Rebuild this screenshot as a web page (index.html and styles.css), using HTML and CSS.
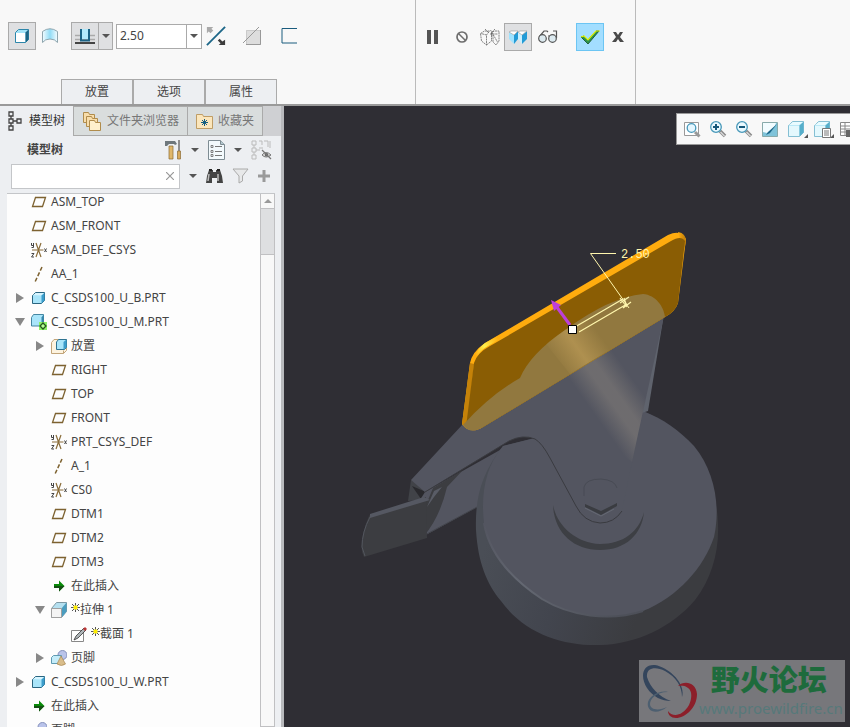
FILE: index.html
```
<!DOCTYPE html>
<html lang="zh-CN">
<head>
	<meta charset="utf-8">
	<title>模型树</title>
	<link rel="stylesheet" href="styles.css">
</head>
<body>
	<!-- shared icons -->
	<svg class="defs" width="0" height="0">
		<symbol id="i-plane" viewBox="0 0 16 16"><path d="M4.5 3.5h10l-3 9h-10z" fill="none" stroke="#7d6230" stroke-width="1.3"/></symbol>
		<symbol id="i-csys" viewBox="0 0 16 16"><path d="M1 8h11.500M5 1l5 14M10 1L5 15" fill="none" stroke="#8a6d3a" stroke-width="1.200"/><path d="M.5 1v2.500h2V1M2.500 3v2.500h-2M.5 11.500h2.500l-2.500 3.500h2.500M13.500 6.500l2 3.500M15.500 6.500l-2 3.500" fill="none" stroke="#444"/></symbol>
		<symbol id="i-axis" viewBox="0 0 16 16"><path d="M11 1L4 16" fill="none" stroke="#7d6230" stroke-width="1.500" stroke-dasharray="4 2"/></symbol>
		<symbol id="i-part" viewBox="0 0 16 16"><path d="M1.500 5.500l3-3h9v8l-3 3h-9z" fill="#a9e5fa" stroke="#2a6580"/><path d="M10.500 5.500l3-3v8l-3 3z" fill="#3c9dcb"/><path d="M2 5l3-2h8l-3 2.500z" fill="#d8f5ff"/></symbol>
		<symbol id="i-active" viewBox="0 0 16 16"><path d="M.5 3.500l2-3h10v9l-2 2.500H.5z" fill="#a9e5fa" stroke="#4586a2"/><path d="M10.500 3.500l2-3v9l-2 2.500z" fill="#3488ad"/><path d="M8 8h8v8H8z" fill="#8af266"/><path d="M12 9l3 3-3 3-3-3z" fill="#b5ff96" stroke="#25571e" stroke-width="1.300"/></symbol>
		<symbol id="i-place" viewBox="0 0 16 16"><path d="M.5 4.500L3 1.500h12.500v11l-3 3H.5z" fill="#fdf3df" stroke="#c2a57a"/><path d="M12.500 12.500v3" stroke="#c2a57a"/><path d="M5.500 4l2-2.500h8v8l-2 2h-8z" fill="#a9e5fa" stroke="#2f7391"/><path d="M12.500 4l3-2.500v8l-3 2z" fill="#3c9dcb"/></symbol>
		<symbol id="i-insert" viewBox="0 0 16 16"><path d="M3 6h5V2.500L13.500 8 8 13.500V10H3z" fill="#0a8a0a"/><path d="M3 8h10.500L8 13.500V10H3z" fill="#155014"/></symbol>
		<symbol id="i-extrude" viewBox="0 0 16 16"><path d="M.5 6.500l5-6h10v9l-5 6H.5z" fill="#b5e0f0" stroke="#7e98a3"/><path d="M10.500 6.500l5-6v9l-5 6z" fill="#4a9dc0"/><path d="M.5 6.500h10v9H.5z" fill="#f4f4f4" stroke="#a0a0a0"/></symbol>
		<symbol id="i-sketch" viewBox="0 0 16 16"><path d="M.5 4.500h12v11H.5z" fill="#fff" stroke="#888"/><path d="M3 14l2-4 8-8 2 2-8 8z" fill="#aeb5b8" stroke="#333" stroke-width=".8"/><path d="M12 3l2-2 2 2-2 2z" fill="#ba3434"/></symbol>
		<symbol id="i-footer" viewBox="0 0 16 16"><circle cx="11.500" cy="5" r="4.500" fill="#b9c3ea" stroke="#8490bb"/><path d="M.5 7.500l2-2h8v6l-2 2h-8z" fill="#c4ecf9" stroke="#5f9bb2"/><path d="M10 6l4.500 8q-4 3-8.500 0z" fill="#d9bd8b" stroke="#a88652" stroke-width=".7"/></symbol>
		<symbol id="i-star" viewBox="0 0 9 9"><path d="M2.500 2.500h4v4h-4z" fill="#ffee00"/><path d="M1 1l2 2M8 1L6 3M1 8l2-2M8 8L6 6M4.500 0v2.500M4.500 6.500V9M0 4.500h2.500M6.500 4.500H9" stroke="#555"/></symbol>
		<symbol id="i-cube" viewBox="0 0 18 18"><path d="M1.500 5.500l4-4h11v11l-4 4h-11z" fill="#bce9f7" stroke="#85bfd3"/><path d="M12.500 5.500l4-4v11l-4 4z" fill="#56aeca"/><path d="M2 6h10v10H2z" fill="#e4f8fd"/><path d="M2 5l4-3h10l-4 3z" fill="#e9fbff"/></symbol>
		<symbol id="i-lens" viewBox="0 0 18 18"><path d="M11 11l5 5" stroke="#888" stroke-width="3.500"/><path d="M11.500 12l4 4" stroke="#d8d8d8" stroke-width="1.500"/><circle cx="7" cy="7" r="5.300" fill="#eaf9ff" stroke="#4798b9" stroke-width="1.300"/></symbol>
	</svg>

	<header class="ribbon">
		<section class="options">
			<div class="row">
				<button class="tool on" aria-label="实体"><svg width="18" height="18" viewBox="0 0 18 18"><path d="M2.500 5.500l3-3h10v10l-3 3h-10z" fill="#a2e3f8" stroke="#2d86aa"/><path d="M12.500 5.500l3-3v10l-3 3z" fill="#1c6484"/><path d="M3 6h9v9H3z" fill="#fff"/></svg></button>
				<button class="tool surf" aria-label="曲面"><svg width="18" height="18" viewBox="0 0 18 18"><defs><linearGradient id="sf"><stop offset="0" stop-color="#f3fcff"/><stop offset=".5" stop-color="#91dcf6"/><stop offset="1" stop-color="#f5fcff"/></linearGradient></defs><path d="M1.500 4.500Q9-1 16.500 4.500v11Q14 12 9 12t-7.500 3.500z" fill="url(#sf)" stroke="#8fa6af"/></svg></button>
				<div class="split">
					<button aria-label="深度"><svg width="20" height="18" viewBox="0 0 20 18"><path d="M0 8.500h5M15 8.500h5M0 12.500h20" stroke="#aaa" stroke-width="1.500"/><path d="M0 16h20" stroke="#444" stroke-width="2"/><path d="M7 2h6v10H7z" fill="#b2e9fb"/><path d="M6 2v11.500h8V2" fill="none" stroke="#1a6285" stroke-width="2"/></svg></button>
					<button class="drop" aria-label="更多深度"><i class="caret"></i></button>
				</div>
				<div class="combo">
					<input type="text" value="2.50" aria-label="深度值">
					<button aria-label="最近值"><i class="caret"></i></button>
				</div>
				<button class="plain flip" aria-label="反向"><svg width="20" height="20" viewBox="0 0 22 22"><path d="M1 21L21 1" stroke="#1c6688" stroke-width="2"/><path d="M1 1h7L6 3l2 2-3 3-2-2-2 2z" fill="#aaa"/><path d="M21 21h-7l2-2-3-3 2-2 3 3 3-2z" fill="#3c3c3c"/></svg></button>
				<button class="plain cut" aria-label="移除材料"><svg width="20" height="20" viewBox="0 0 20 20"><path d="M4.500 4.500h14v14h-14z" fill="#ddd" stroke="#aaa" stroke-dasharray="1 1"/><path d="M18.500 4v14.500H4" fill="none" stroke="#999"/><path d="M1 17L17 1" stroke="#999"/></svg></button>
				<button class="plain" aria-label="加厚"><svg width="16" height="16" viewBox="0 0 16 16"><path d="M16 .5H1v14.500h15" fill="none" stroke="#1a5c7e"/></svg></button>
			</div>
			<nav class="panels">
				<button>放置</button>
				<button>选项</button>
				<button>属性</button>
			</nav>
		</section>
		<section class="confirm">
			<button class="plain" aria-label="暂停"><svg width="12" height="14" viewBox="0 0 12 14"><path d="M0 0h4v14H0zM7 0h4v14H7z" fill="#555"/></svg></button>
			<button class="plain ban" aria-label="无预览"><svg width="12" height="12" viewBox="0 0 12 12"><circle cx="6" cy="6" r="5" fill="none" stroke="#6e6e6e" stroke-width="1.700"/><path d="M2.500 2.500l7 7" stroke="#6e6e6e" stroke-width="1.500"/></svg></button>
			<button class="plain wire" aria-label="分离"><svg width="20" height="17" viewBox="0 0 20 17"><path d="M.5 4.500l4-2.500h5l-3 4v10l-5-4zM6.500 6L1 4.500M6.500 16l5-4V3M10 5h8M10.500 1l7 12M11 5l3-3h5v10l-3 4-3-3V6zM5 0l4 4M15 0l-4 4" fill="none" stroke="#666" stroke-width=".8" stroke-dasharray="2 .6"/></svg></button>
			<button class="tool on" aria-label="连接"><svg width="20" height="15" viewBox="0 0 20 15"><path d="M1 2l5 3v9l-5-5z" fill="#9fe3ff"/><path d="M6 5l4-4v8l-4 5z" fill="#249bd6"/><path d="M10 2l4 3v9l-4-5z" fill="#c9f0ff"/><path d="M14 5l5-4v8l-5 5z" fill="#249bd6"/><path d="M1 2l2-1h7L6 5zM10 2l2-1h7l-5 4z" fill="#fff" stroke="#999" stroke-width=".6"/></svg></button>
			<button class="plain glasses" aria-label="预览"><svg width="20" height="14" viewBox="0 0 20 14"><path d="M1 7L6 1h3l1 1M10 6h2M18.500 8V1H15" fill="none" stroke="#555" stroke-width="1.200"/><circle cx="4.500" cy="8.500" r="3.800" fill="#dceaf0" stroke="#555" stroke-width="1.200"/><circle cx="14.500" cy="8.500" r="3.800" fill="#dceaf0" stroke="#555" stroke-width="1.200"/></svg></button>
			<button class="tool ok" aria-label="确定"><svg width="20" height="15" viewBox="0 0 20 15"><path d="M1 7l3-1 4 4 8-9h3L8 14z" fill="#2c944c" stroke="#24613b"/><path d="M1 7l3-1 4 4 8-9h4" fill="none" stroke="#e5f500" stroke-width="1.200"/></svg></button>
			<button class="plain" aria-label="取消"><svg width="12" height="10" viewBox="0 0 12 10"><path d="M1 0h3l2 3 2-3h3L8 5l4 5H8L6 7l-2 3H0l4-5z" fill="#4a4a4a"/></svg></button>
		</section>
	</header>

	<main class="work">
		<aside class="side">
			<nav class="tabs">
				<button class="current"><svg width="14" height="20" viewBox="0 0 14 20"><path d="M1 1h4v4H1zM1 8h4v4H1zM1 15h4v4H1zM9 8h4v4H9zM3 5v3M3 12v3M5 10h4" fill="none" stroke="#444" stroke-width="1.300"/></svg>模型树</button>
				<button><svg width="20" height="20" viewBox="0 0 20 20"><g fill="#f8ddaa" stroke="#b08c4c"><path d="M1.500 1.500h5l1 2h5v8h-11z"/><path d="M4.500 5.500h5l1 2h5v8h-11z"/><path d="M7.500 9.500h5l1 2h5v8h-11z" fill="#fff0cd"/></g></svg>文件夹浏览器</button>
				<button><svg width="17" height="16" viewBox="0 0 17 16"><path d="M.5 1.500h6l1 2h9v12H.5z" fill="#fbe6bb" stroke="#bf9d65"/><path d="M8.500 6v7M5 9.500h7M6 7l5 5M11 7l-5 5" stroke="#145e80"/></svg>收藏夹</button>
			</nav>
			<div class="bar">
				<h1>模型树</h1>
				<button class="plain" aria-label="设置"><svg width="17" height="20" viewBox="0 0 17 20"><path d="M1 1h9l2 3-2 1-1-1H4L2 6H0V1z" fill="#6e777c"/><path d="M4 6h4v13H4z" fill="#e0b76b" stroke="#8b6a34" stroke-width=".7"/><path d="M14 0v11" stroke="#777" stroke-width="1.600"/><path d="M12.500 11h3v8h-3z" fill="#d8aa5d" stroke="#8b6a34" stroke-width=".7"/></svg></button>
				<button class="plain" aria-label="设置菜单"><i class="caret"></i></button>
				<button class="plain" aria-label="显示"><svg width="17" height="20" viewBox="0 0 17 20"><path d="M.5.5h12l4 4v15H.5z" fill="#f3fafd" stroke="#7e8c93"/><path d="M12.500.5v4h4" fill="#b4c8d0" stroke="#7e8c93"/><path d="M7 6.500h7M7 11.500h7M7 15.500h7" stroke="#777"/><path d="M3 5.500h2v2H3zM3 10.500h2v2H3zM3 14.500h2v2H3z" fill="none" stroke="#666" stroke-width=".8"/></svg></button>
				<button class="plain" aria-label="显示菜单"><i class="caret"></i></button>
				<button class="plain" aria-label="隐藏列"><svg width="21" height="20" viewBox="0 0 21 20"><path d="M1 1h4v4H1zM1 8h4v4H1zM1 15h4v4H1zM3 5v3M3 12v3M5 10h4M8 1h3v4M13 1h4v6M8 8h4M19 1v7" fill="none" stroke="#bbb"/><path d="M11 15q4-5 9 0-5 4-9 0z" fill="#ddd" stroke="#777"/><circle cx="15.500" cy="14.800" r="1.800" fill="#666"/><path d="M11 10l9 9" stroke="#777" stroke-width="1.300"/></svg></button>
			</div>
			<div class="bar find">
				<div class="search">
					<input type="text" aria-label="搜索模型树">
					<button aria-label="清除"><svg width="8" height="8" viewBox="0 0 8 8"><path d="M0 0l8 8M8 0L0 8" stroke="#999" stroke-width="1.200"/></svg></button>
				</div>
				<button class="plain" aria-label="搜索选项"><i class="caret"></i></button>
				<button class="plain" aria-label="查找"><svg width="17" height="16" viewBox="0 0 17 16"><path d="M3 2h4v2h3V2h4l2 6 1 7h-6v-5H6v5H0l1-7z" fill="#444"/><path d="M3 1h3v2H3zM11 1h3v2h-3z" fill="#222"/><path d="M3 6l-1 7M12 6v7" stroke="#bbb" stroke-width="1.500"/></svg></button>
				<button class="plain" aria-label="过滤"><svg width="17" height="16" viewBox="0 0 17 16"><path d="M1 1h15l-5.500 7v5L7 15V8z" fill="#e7e8e9" stroke="#aaa"/></svg></button>
				<button class="plain" aria-label="添加"><svg width="12" height="12" viewBox="0 0 12 12"><path d="M6 0v12M0 6h12" stroke="#9a9a9a" stroke-width="3"/></svg></button>
			</div>
			<div class="pane">
				<ul class="tree">
					<li><div class="node"><i></i><svg><use href="#i-plane"/></svg>ASM_TOP</div></li>
					<li><div class="node"><i></i><svg><use href="#i-plane"/></svg>ASM_FRONT</div></li>
					<li><div class="node"><i></i><svg><use href="#i-csys"/></svg>ASM_DEF_CSYS</div></li>
					<li><div class="node"><i></i><svg><use href="#i-axis"/></svg>AA_1</div></li>
					<li><div class="node"><button class="closed" aria-label="展开"></button><svg><use href="#i-part"/></svg>C_CSDS100_U_B.PRT</div></li>
					<li><div class="node"><button class="open" aria-label="折叠"></button><svg><use href="#i-active"/></svg>C_CSDS100_U_M.PRT</div>
						<ul>
							<li><div class="node"><button class="closed" aria-label="展开"></button><svg><use href="#i-place"/></svg>放置</div></li>
							<li><div class="node"><i></i><svg><use href="#i-plane"/></svg>RIGHT</div></li>
							<li><div class="node"><i></i><svg><use href="#i-plane"/></svg>TOP</div></li>
							<li><div class="node"><i></i><svg><use href="#i-plane"/></svg>FRONT</div></li>
							<li><div class="node"><i></i><svg><use href="#i-csys"/></svg>PRT_CSYS_DEF</div></li>
							<li><div class="node"><i></i><svg><use href="#i-axis"/></svg>A_1</div></li>
							<li><div class="node"><i></i><svg><use href="#i-csys"/></svg>CS0</div></li>
							<li><div class="node"><i></i><svg><use href="#i-plane"/></svg>DTM1</div></li>
							<li><div class="node"><i></i><svg><use href="#i-plane"/></svg>DTM2</div></li>
							<li><div class="node"><i></i><svg><use href="#i-plane"/></svg>DTM3</div></li>
							<li><div class="node"><i></i><svg><use href="#i-insert"/></svg>在此插入</div></li>
							<li><div class="node"><button class="open" aria-label="折叠"></button><svg><use href="#i-extrude"/></svg><span><svg class="star"><use href="#i-star"/></svg>拉伸 1</span></div>
								<ul>
									<li><div class="node"><i></i><svg><use href="#i-sketch"/></svg><span><svg class="star"><use href="#i-star"/></svg>截面 1</span></div></li>
								</ul>
							</li>
							<li><div class="node"><button class="closed" aria-label="展开"></button><svg><use href="#i-footer"/></svg>页脚</div></li>
						</ul>
					</li>
					<li><div class="node"><button class="closed" aria-label="展开"></button><svg><use href="#i-part"/></svg>C_CSDS100_U_W.PRT</div></li>
					<li><div class="node"><i></i><svg><use href="#i-insert"/></svg>在此插入</div></li>
					<li><div class="node"><i></i><svg><use href="#i-footer"/></svg>页脚</div></li>
				</ul>
				<div class="scroll">
					<button aria-label="向上滚动"></button>
					<div class="thumb"></div>
				</div>
			</div>
		</aside>

		<section class="view">
			<svg class="scene" viewBox="284 106 566 621" preserveAspectRatio="xMidYMid meet">
				<defs>
					<linearGradient id="tyre" gradientUnits="userSpaceOnUse" x1="480" y1="560" x2="640" y2="610">
						<stop offset="0" stop-color="#4a4e56"/><stop offset=".5" stop-color="#42454e"/><stop offset="1" stop-color="#3b3c40"/>
					</linearGradient>
					<linearGradient id="shine" gradientUnits="userSpaceOnUse" x1="582" y1="397" x2="624" y2="367">
						<stop offset="0" stop-color="#8f8880" stop-opacity="0"/><stop offset=".4" stop-color="#8f8880" stop-opacity=".45"/><stop offset=".6" stop-color="#8f8880" stop-opacity=".45"/><stop offset="1" stop-color="#8f8880" stop-opacity="0"/>
					</linearGradient>
					<linearGradient id="glow" gradientUnits="userSpaceOnUse" x1="580" y1="396" x2="622" y2="366">
						<stop offset="0" stop-color="#c7a45d" stop-opacity="0"/><stop offset=".5" stop-color="#c7a45d" stop-opacity=".55"/><stop offset="1" stop-color="#c7a45d" stop-opacity="0"/>
					</linearGradient>
					<linearGradient id="rim" gradientUnits="userSpaceOnUse" x1="484" y1="523" x2="620" y2="612">
						<stop offset="0" stop-color="#535560"/><stop offset=".4" stop-color="#646872"/><stop offset="1" stop-color="#4d5059"/>
					</linearGradient>
					<linearGradient id="edge" gradientUnits="userSpaceOnUse" x1="475" y1="355" x2="498" y2="338">
						<stop offset="0" stop-color="#ffac0e"/><stop offset=".45" stop-color="#fff04c"/><stop offset="1" stop-color="#ffac0e"/>
					</linearGradient>
					<linearGradient id="corner" x1="0" x2="1"><stop offset="0" stop-color="#ffac0e"/><stop offset="1" stop-color="#ba7a08"/></linearGradient>
				</defs>

				<!-- brake arm and pedal -->
				<path d="M411 480L408 501 420 500 428 490z" fill="#414348"/>
				<path d="M412 486l9 13 5-7z" fill="#29292d"/>
				<path d="M425 492L500 450 479 506 424 536 420 500z" fill="#535560"/>
				<path d="M428 500L433 488 463 470 447 487Q440 517 424 536L415 540 414 502z" fill="#3c3d41"/>
				<path d="M423 536L479 506" stroke="#44464d" fill="none"/>
				<path d="M370 515L426 497 427 538 364 557Q357 545 369 516z" fill="#3c3d41"/>
				<path d="M370 514L424 497 430 500 370 518z" fill="#555862"/>
				<path d="M370 517Q362 532 362 547L365 556" fill="none" stroke="#52555d"/>
				<path d="M427 507l7-10 8-10-8 4z" fill="#595c66"/>

				<!-- wheel -->
				<path d="M503 446C481 474 475 498 476 530C478 563 487 584 501 601C524 633 562 646 600 645C637 644 672 627 695 600C711 579 719 553 718 525C717 473 687 431 643 411z" fill="url(#tyre)"/>
				<path d="M503 446C484 468 481 497 484 523C489 553 509 577 542 599C570 616 609 622 643 611C678 597 704 567 714 537C721 505 714 470 694 446C679 430 663 419 643 411z" fill="#535560"/>
				<path d="M484 523C489 553 509 577 542 599C570 616 609 622 643 611" fill="none" stroke="url(#rim)" stroke-width="2"/>
				<path d="M553 505C554 532 573 550 600 550C626 550 642 534 644 512C639 532 623 544 600 544C576 543 557 526 553 505z" fill="#3d3f44"/>

				<!-- fork -->
				<path d="M664 314L648 411 642 413 658 318z" fill="#5f636d"/>
				<path d="M463 424L411 480 425 492 509 441Q523 434 535 439 542 443 550 458L576 506Q584 522 600 523 617 523 622 510L640 425 664 316 600 340z" fill="#535560"/>
				<path d="M425 492L509 441Q523 434 535 439 542 443 550 458L576 506Q584 522 600 523 614 523 622 511" fill="none" stroke="#3a3b40"/>
				<path d="M540 392L664 316 640 425 632 462z" fill="url(#shine)"/>
				<path d="M584 487Q586 479 601 479 615 480 617 488V506L601 515 585 507z" fill="#535560"/>
				<path d="M585 504L601 511 617 503V506L601 515 585 507z" fill="#3a3c41"/>
				<path d="M585 508L601 516 614 509" fill="none" stroke="#656973"/>
				<path d="M584 496V487Q586 479 601 479 615 480 617 488" fill="none" stroke="#484b54"/>

				<!-- plate -->
				<path d="M462 424L470 363Q472 352 485 343L668 235Q681 229 686 239L678 303Q675 312 665 317L483 427Q470 435 462 424z" fill="#ffac0e"/>
				<path d="M462 424L470 363 474 364 467 429z" fill="#c58209"/>
				<path d="M678 232Q686 233 686 242L684 250 679 236z" fill="url(#corner)"/>
				<path d="M466 427L474 363Q477 353 490 346L671 241Q681 235 685 241L678 303Q675 312 665 317L483 427Q472 433 466 427z" fill="#8a5d04"/>
				<path d="M463 425Q490 395 520 378 530 354 565 330 610 297 643 294C656 295 664 307 665 317L483 427Q470 435 463 425z" fill="#91783f"/>
				<path d="M546 344L565 330 590 317 634 335 570 374z" fill="url(#glow)"/>
				<path d="M475 356Q477 349 485 343L498 336 500 339 488 346Q482 349 478 355z" fill="url(#edge)"/>

				<!-- depth dimension and drag handle -->
				<g fill="none" stroke="#fff6ad">
					<path d="M616 253.500H590.500L629 308"/>
					<path d="M575 327L623 299M579 332L627 304M620 298l6 8M620 303l9-6M623 308l8-6M624 298l3 9" stroke-width="1.200"/>
				</g>
				<text x="621" y="258" class="dim">2.50</text>
				<path d="M570 325L556 306" stroke="#bd3fdb" stroke-width="3"/>
				<path d="M551 300L561 305 554 311z" fill="#bd3fdb"/>
				<path d="M568.500 325.500h8v8h-8z" fill="#fff" stroke="#000"/>
			</svg>

			<div class="viewbar">
				<button aria-label="重新调整"><svg width="18" height="18" viewBox="0 0 18 18"><path d="M1.500 2.500h14v13h-14z" fill="#fff" stroke="#999"/><circle cx="8.500" cy="8" r="4.300" fill="#e5f7ff" stroke="#4798b9" stroke-width="1.300"/><path d="M12 12l4.500 4.500" stroke="#999" stroke-width="3"/></svg></button>
				<button aria-label="放大"><svg width="18" height="18" viewBox="0 0 18 18"><use href="#i-lens"/><path d="M4 7h6M7 4v6" stroke="#15577a" stroke-width="2"/></svg></button>
				<button aria-label="缩小"><svg width="18" height="18" viewBox="0 0 18 18"><use href="#i-lens"/><path d="M4 7h6" stroke="#15577a" stroke-width="2"/></svg></button>
				<button aria-label="重画"><svg width="18" height="18" viewBox="0 0 18 18"><path d="M1.500 2.500h15v14h-15z" fill="#7fc3d9" stroke="#8aa"/><path d="M2 3h13Q13 10 6 13L2 12z" fill="#f2fcff"/><path d="M16 4l-7 9-4 2 2-3z" fill="#1c6688"/></svg></button>
				<button class="more" aria-label="显示样式"><svg width="18" height="18"><use href="#i-cube"/></svg></button>
				<button class="more" aria-label="已保存方向"><svg width="18" height="18" viewBox="0 0 18 18"><use href="#i-cube"/><path d="M9.500 8.500h8v9h-8z" fill="#fff" stroke="#777"/><path d="M11 11h5M11 13h5M11 15h5" stroke="#777"/></svg></button>
				<button aria-label="视图管理器"><svg width="18" height="18" viewBox="0 0 18 18"><path d="M1.500 2.500h15v13h-15zM1 6h15M1 9h15M1 12h15M6 2v13" fill="#fff" stroke="#888"/><path d="M7 10h8v7H7z" fill="#666"/></svg></button>
			</div>

			<div class="mark">
				<svg width="58" height="58" viewBox="0 0 58 58" fill="none">
					<path fill-rule="evenodd" d="M41 35C45 22 29 6 14 3C1 2-1 15 6 26C12 35 21 39 30 39C18 35 9 25 6 15C5 6 14 4 24 9C35 15 41 24 41 35z" fill="#34455c"/>
					<path d="M37 24C43 18 55 20 56 32C56 46 44 56 35 56C30 56 27 53 27 49C31 55 41 55 48 43C54 30 48 22 37 24z" fill="#8c1f2a"/>
					<path d="M27 30C15 30 9 37 9 42C9 48 18 49 26 45C15 54 5 49 7 40C9 34 18 28 27 30z" fill="#4d5f70"/>
				</svg>
				<div>
					<strong>野火论坛</strong>
					<a href="#">www.proewildfire.cn</a>
				</div>
			</div>
		</section>
	</main>
</body>
</html>
```
FILE: styles.css
```
* {
	box-sizing: border-box;
}

body {
	margin: 0;
	height: 100vh;
	display: flex;
	flex-direction: column;
	overflow: hidden;
	background: #f8f8f8;
	color: #444;
	font: 12px/24px "Noto Sans", "Noto Sans CJK SC", sans-serif;
}

button, input {
	font: inherit;
	color: inherit;
	margin: 0;
	padding: 0;
	border: 0;
	background: none;
}

button {
	display: flex;
	align-items: center;
	justify-content: center;
}

svg {
	display: block;
	flex: none;
}

.defs {
	position: absolute;
}

.caret {
	border: 4px solid transparent;
	border-top-color: #555;
	border-bottom: 0;
}

/* ribbon */
.ribbon {
	display: flex;
	flex: none;
	height: 106px;
	border-bottom: 2px solid #9a9a9a;
}

.options {
	width: 416px;
	display: flex;
	flex-direction: column;
	justify-content: space-between;
	border-right: 1px solid #bbb;
}

.row {
	display: flex;
	align-items: center;
	padding: 22px 0 0 8px;
}

.tool {
	width: 28px;
	height: 28px;
}

.on {
	background: #dfe0e2;
	border: 1px solid #aaa;
}

.surf {
	margin-right: 7px;
}

.split {
	display: flex;
	height: 28px;
	border: 1px solid #aaa;
	background: #dfe0e2;
}

.split button {
	width: 26px;
}

.split .drop {
	width: 14px;
	border-left: 1px solid #aaa;
}

.combo {
	display: flex;
	width: 86px;
	height: 25px;
	margin: 0 4px 0 3px;
	border: 1px solid #aaa;
	background: #fff;
}

.combo input {
	flex: 1;
	min-width: 0;
	padding-left: 3px;
}

.combo button {
	width: 15px;
	border-left: 1px solid #aaa;
}

.flip {
	margin-right: 16px;
}

.cut {
	margin-right: 19px;
}

.panels {
	display: flex;
	padding-left: 61px;
}

.panels button {
	width: 72px;
	height: 25px;
	border: 1px solid #aaa;
	border-bottom: 0;
	background: #edeff2;
}

.confirm {
	width: 220px;
	display: flex;
	align-items: center;
	align-self: stretch;
	padding: 0 0 30px 11px;
	border-right: 1px solid #bbb;
}

.ban {
	margin: 0 12px 0 17px;
}

.wire {
	margin-right: 4px;
}

.glasses {
	margin: 0 18px 0 6px;
}

.ok {
	margin-right: 8px;
	background: #a3deff;
	border: 1px solid #6cc5f3;
}

/* side panel */
.work {
	flex: 1;
	min-height: 0;
	display: flex;
}

.side {
	width: 284px;
	flex: none;
	display: flex;
	flex-direction: column;
	background: #edeff2;
	border-right: 3px solid #b8b9bc;
}

.tabs {
	display: flex;
	flex: none;
	height: 30px;
	background: #cfd0d3;
}

.tabs button {
	gap: 5px;
	padding: 0 8px;
	border: 1px solid #aaa;
	border-left: 0;
	background: #d9dddd;
	color: #777;
}

.tabs .current {
	gap: 7px;
	border-bottom: 0;
	border-top: 0;
	background: #edeff2;
	color: #333;
}

.bar {
	display: flex;
	flex: none;
	align-items: center;
	gap: 9px;
	height: 27px;
	padding: 0 9px 0 27px;
}

.bar h1 {
	flex: 1;
	margin: 0;
	font-size: 12px;
}

.find {
	height: 26px;
	padding: 0 11px;
}

.search {
	flex: 1;
	min-width: 0;
	display: flex;
	height: 25px;
	border: 1px solid #c4c6c9;
	background: #fff;
}

.search input {
	flex: 1;
	min-width: 0;
}

.search button {
	width: 18px;
}

.pane {
	flex: 1;
	min-height: 0;
	display: flex;
	margin: 4px 6px 0 7px;
	border-top: 1px solid #c4c6c9;
	background: #fdfdfd;
	overflow: hidden;
}

.tree {
	flex: 1;
	margin: -4px 0 0;
}

.tree, .tree ul {
	padding: 0;
	list-style: none;
}

.tree ul {
	padding-left: 20px;
}

.node {
	display: grid;
	grid-template-columns: 14px 16px auto;
	column-gap: 4px;
	align-items: center;
	height: 24px;
	padding-left: 6px;
	white-space: nowrap;
}

.node svg {
	width: 16px;
	height: 16px;
}

.node span {
	display: flex;
	align-items: center;
}

.node .star {
	width: 9px;
	height: 9px;
	margin-bottom: 6px;
}

.closed::before {
	content: "";
	border: 5px solid transparent;
	border-left: 8px solid #888;
	border-right: 0;
}

.open::before {
	content: "";
	border: 5px solid transparent;
	border-top: 8px solid #888;
	border-bottom: 0;
}

.scroll {
	width: 15px;
	border: 1px solid #c0c0c2;
	border-top: 0;
	background: #f8f8f8;
}

.scroll button {
	width: 100%;
	height: 14px;
}

.scroll button::before {
	content: "";
	border: 4px solid transparent;
	border-bottom-color: #999;
	border-top: 0;
}

.thumb {
	height: 47px;
	border: 1px solid #c0c0c2;
	border-width: 1px 0;
	background: #dedfe1;
}

/* graphics window */
.view {
	flex: 1;
	min-width: 0;
	position: relative;
	overflow: hidden;
	background: #2f2e34;
}

.scene {
	width: 100%;
	height: 100%;
}

.dim {
	font: 12px "Liberation Mono", monospace;
	fill: #fff6ad;
}

.viewbar {
	position: absolute;
	top: 7px;
	right: -18px;
	display: flex;
	height: 32px;
	padding: 0 6px 0 2px;
	border: 1px solid #999;
	background: #f8f8f8;
}

.viewbar button {
	width: 26px;
}

.more {
	position: relative;
}

.more::after {
	content: "";
	position: absolute;
	right: 1px;
	bottom: 6px;
	border: 2px solid #555;
	border-top-color: transparent;
	border-left-color: transparent;
}

.mark {
	position: absolute;
	right: 5px;
	bottom: 5px;
	display: flex;
	align-items: center;
	width: 206px;
	height: 62px;
	background: #77777b;
}

.mark svg {
	margin-left: 2px;
}

.mark div {
	flex: 1;
	text-align: right;
	padding-right: 4px;
}

.mark strong {
	display: block;
	padding-right: 16px;
	color: #1e6b3c;
	font-size: 29px;
	font-weight: 900;
	line-height: 34px;
}

.mark a {
	display: block;
	color: #56797a;
	font-size: 15px;
	line-height: 22px;
	text-decoration: none;
}
```
